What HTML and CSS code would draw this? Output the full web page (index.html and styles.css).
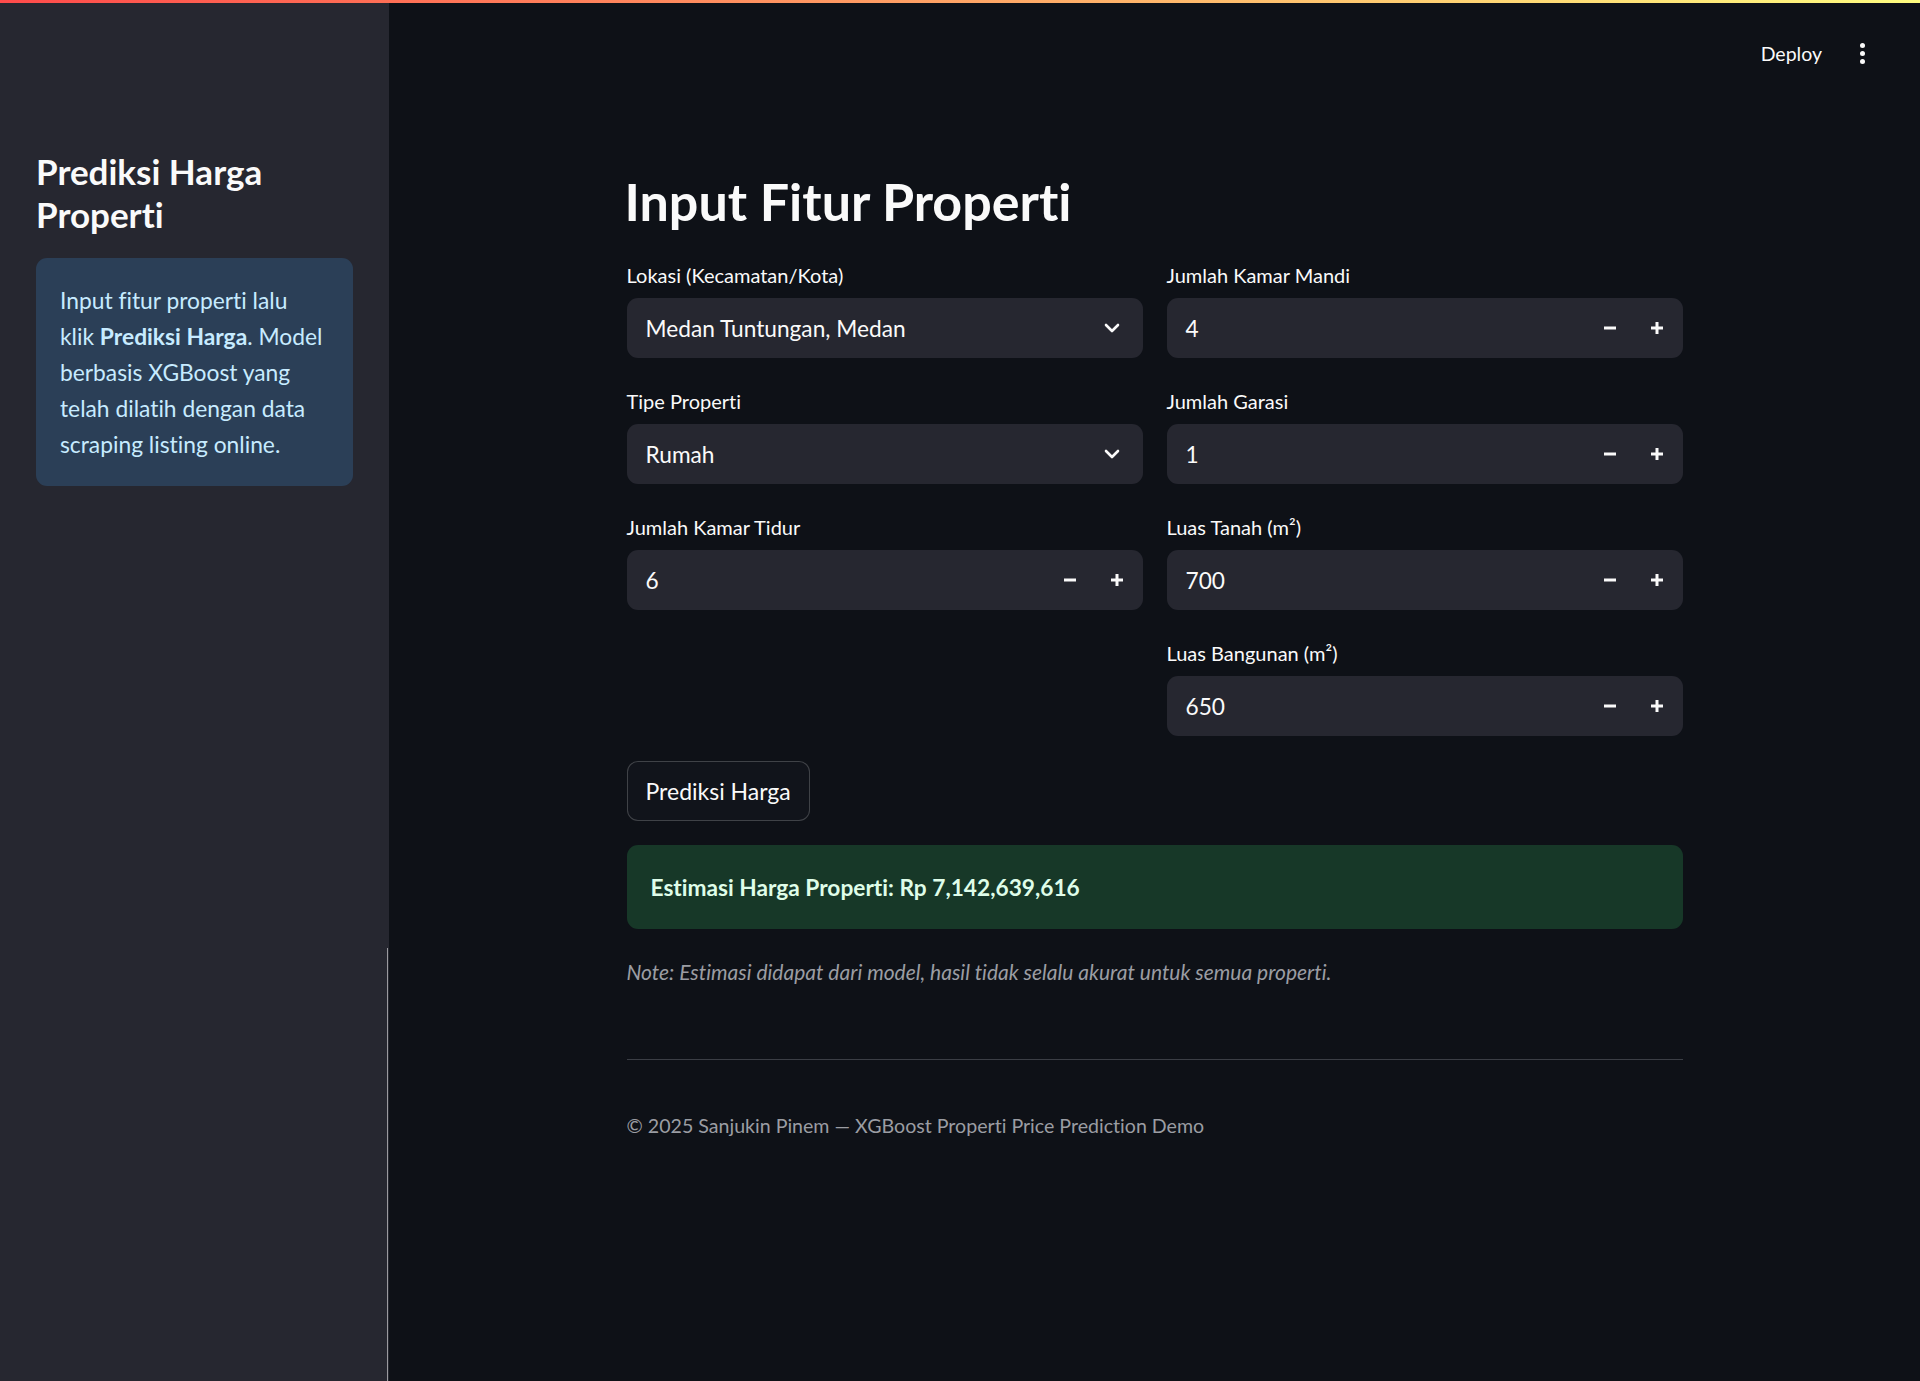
FILE: index.html
```html
<!DOCTYPE html>
<html lang="id">
<head>
<meta charset="utf-8">
<title>Prediksi Harga Properti</title>
<link rel="stylesheet" href="styles.css">
</head>
<body>
<div class="decoration"></div>
<div class="app">
  <aside class="sidebar">
    <h2 class="side-title">Prediksi Harga Properti</h2>
    <div class="info-box">
      Input fitur properti lalu klik <strong>Prediksi Harga</strong>. Model berbasis XGBoost yang telah dilatih dengan data scraping listing online.
    </div>
    <div class="resize-line"></div>
  </aside>
  <main class="main">
    <header class="header">
      <span class="deploy">Deploy</span>
      <span class="menu-dots"><i></i><i></i><i></i></span>
    </header>
    <section class="block">
      <h1 class="title">Input Fitur Properti</h1>
      <div class="columns">
        <div class="col">
          <div class="widget">
            <label class="label">Lokasi (Kecamatan/Kota)</label>
            <div class="select">
              <span class="value">Medan Tuntungan, Medan</span>
              <svg class="chev" width="16" height="10" viewBox="0 0 16 10"><polyline points="2,2 8,8 14,2" fill="none" stroke="#fafafa" stroke-width="2.6" stroke-linecap="round" stroke-linejoin="round"/></svg>
            </div>
          </div>
          <div class="widget">
            <label class="label">Tipe Properti</label>
            <div class="select">
              <span class="value">Rumah</span>
              <svg class="chev" width="16" height="10" viewBox="0 0 16 10"><polyline points="2,2 8,8 14,2" fill="none" stroke="#fafafa" stroke-width="2.6" stroke-linecap="round" stroke-linejoin="round"/></svg>
            </div>
          </div>
          <div class="widget">
            <label class="label">Jumlah Kamar Tidur</label>
            <div class="number">
              <span class="value">6</span>
              <span class="step"><svg width="12" height="12" viewBox="0 0 12 12"><rect x="0" y="4.5" width="12" height="3" fill="#fafafa"/></svg></span>
              <span class="step"><svg width="12" height="12" viewBox="0 0 12 12"><rect x="0" y="4.5" width="12" height="3" fill="#fafafa"/><rect x="4.5" y="0" width="3" height="12" fill="#fafafa"/></svg></span>
            </div>
          </div>
        </div>
        <div class="col">
          <div class="widget">
            <label class="label">Jumlah Kamar Mandi</label>
            <div class="number">
              <span class="value">4</span>
              <span class="step"><svg width="12" height="12" viewBox="0 0 12 12"><rect x="0" y="4.5" width="12" height="3" fill="#fafafa"/></svg></span>
              <span class="step"><svg width="12" height="12" viewBox="0 0 12 12"><rect x="0" y="4.5" width="12" height="3" fill="#fafafa"/><rect x="4.5" y="0" width="3" height="12" fill="#fafafa"/></svg></span>
            </div>
          </div>
          <div class="widget">
            <label class="label">Jumlah Garasi</label>
            <div class="number">
              <span class="value">1</span>
              <span class="step"><svg width="12" height="12" viewBox="0 0 12 12"><rect x="0" y="4.5" width="12" height="3" fill="#fafafa"/></svg></span>
              <span class="step"><svg width="12" height="12" viewBox="0 0 12 12"><rect x="0" y="4.5" width="12" height="3" fill="#fafafa"/><rect x="4.5" y="0" width="3" height="12" fill="#fafafa"/></svg></span>
            </div>
          </div>
          <div class="widget">
            <label class="label">Luas Tanah (m²)</label>
            <div class="number">
              <span class="value">700</span>
              <span class="step"><svg width="12" height="12" viewBox="0 0 12 12"><rect x="0" y="4.5" width="12" height="3" fill="#fafafa"/></svg></span>
              <span class="step"><svg width="12" height="12" viewBox="0 0 12 12"><rect x="0" y="4.5" width="12" height="3" fill="#fafafa"/><rect x="4.5" y="0" width="3" height="12" fill="#fafafa"/></svg></span>
            </div>
          </div>
          <div class="widget">
            <label class="label">Luas Bangunan (m²)</label>
            <div class="number">
              <span class="value">650</span>
              <span class="step"><svg width="12" height="12" viewBox="0 0 12 12"><rect x="0" y="4.5" width="12" height="3" fill="#fafafa"/></svg></span>
              <span class="step"><svg width="12" height="12" viewBox="0 0 12 12"><rect x="0" y="4.5" width="12" height="3" fill="#fafafa"/><rect x="4.5" y="0" width="3" height="12" fill="#fafafa"/></svg></span>
            </div>
          </div>
        </div>
      </div>
      <button class="btn">Prediksi Harga</button>
      <div class="success">Estimasi Harga Properti: Rp 7,142,639,616</div>
      <p class="note">Note: Estimasi didapat dari model, hasil tidak selalu akurat untuk semua properti.</p>
      <hr class="divider">
      <p class="footer">© 2025 Sanjukin Pinem — XGBoost Properti Price Prediction Demo</p>
    </section>
  </main>
</div>
</body>
</html>
```

FILE: styles.css
```css
* { box-sizing: border-box; }
html, body {
  margin: 0;
  padding: 0;
  background: #0e1117;
  color: #fafafa;
  font-family: "Lato", "Source Sans Pro", "Liberation Sans", sans-serif;
  font-variant-ligatures: none;
  overflow: hidden;
}
.decoration {
  position: absolute;
  top: 0;
  left: 0;
  right: 0;
  height: 3px;
  background: linear-gradient(90deg, #ff4b4b, #fffd80);
  z-index: 10;
}
.app {
  display: flex;
  width: 1920px;
  height: 1381px;
}
.sidebar {
  position: relative;
  width: 389px;
  flex: none;
  background: #262730;
  padding: 150px 36px 0 36px;
}
.side-title {
  margin: 0 0 22px 0;
  font-size: 35px;
  line-height: 43px;
  font-weight: 700;
  color: #fafafa;
}
.info-box {
  background: #2b3f57;
  color: #c7ebff;
  border-radius: 11px;
  padding: 24px 28px 24px 24px;
  font-size: 22.8px;
  line-height: 36px;
}
.info-box strong { font-weight: 700; }
.resize-line {
  position: absolute;
  right: 1px;
  top: 948px;
  bottom: 0;
  width: 1px;
  background: #9a9a9f;
}
.main {
  flex: 1;
  display: flex;
  flex-direction: column;
  align-items: center;
}
.header {
  align-self: stretch;
  height: 108px;
  display: flex;
  justify-content: flex-end;
  align-items: center;
  gap: 38px;
  padding: 0 55px 2px 0;
}
.deploy {
  font-size: 19.5px;
  color: #fafafa;
}
.menu-dots {
  display: flex;
  flex-direction: column;
  gap: 3px;
}
.menu-dots i {
  display: block;
  width: 5px;
  height: 5px;
  border-radius: 50%;
  background: #fafafa;
}
.block {
  width: 1056px;
  padding-top: 63px;
}
.title {
  margin: -3px 0 23px -2px;
  font-size: 52px;
  line-height: 67px;
  font-weight: 700;
  color: #fafafa;
}
.columns {
  display: grid;
  grid-template-columns: 1fr 1fr;
  gap: 24px;
  align-items: start;
}
.col {
  display: flex;
  flex-direction: column;
  gap: 26px;
}
.widget {
  display: flex;
  flex-direction: column;
}
.label {
  height: 40px;
  font-size: 20px;
  line-height: 34px;
  color: #fafafa;
}
.select, .number {
  height: 60px;
  background: #262730;
  border-radius: 11px;
  display: flex;
  align-items: center;
  font-size: 22.7px;
}
.select {
  padding: 0 23px 0 19px;
  justify-content: space-between;
}
.number {
  padding: 0 2px 0 19px;
}
.number .value { flex: 1; }
.step {
  width: 47px;
  height: 100%;
  display: flex;
  align-items: center;
  justify-content: center;
}
.chev { display: block; }
.btn {
  margin-top: 25px;
  height: 60px;
  padding: 0 18px;
  background: #11141b;
  color: #fafafa;
  border: 1px solid rgba(250, 250, 250, 0.2);
  border-radius: 11px;
  font-family: inherit;
  font-variant-ligatures: none;
  font-size: 23px;
}
.success {
  margin-top: 24px;
  height: 84px;
  background: #173828;
  color: #dffde9;
  border-radius: 11px;
  padding: 0 24px;
  display: flex;
  align-items: center;
  font-size: 22.7px;
  font-weight: 700;
}
.note {
  margin: 28px 0 0 0;
  font-size: 21px;
  line-height: 30px;
  font-style: italic;
  color: #9b9da3;
}
.divider {
  margin: 72px 0 0 0;
  border: 0;
  height: 1px;
  background: #3b3e45;
}
.footer {
  margin: 51px 0 0 0;
  font-size: 19.6px;
  line-height: 30px;
  color: #9b9da3;
}
```
